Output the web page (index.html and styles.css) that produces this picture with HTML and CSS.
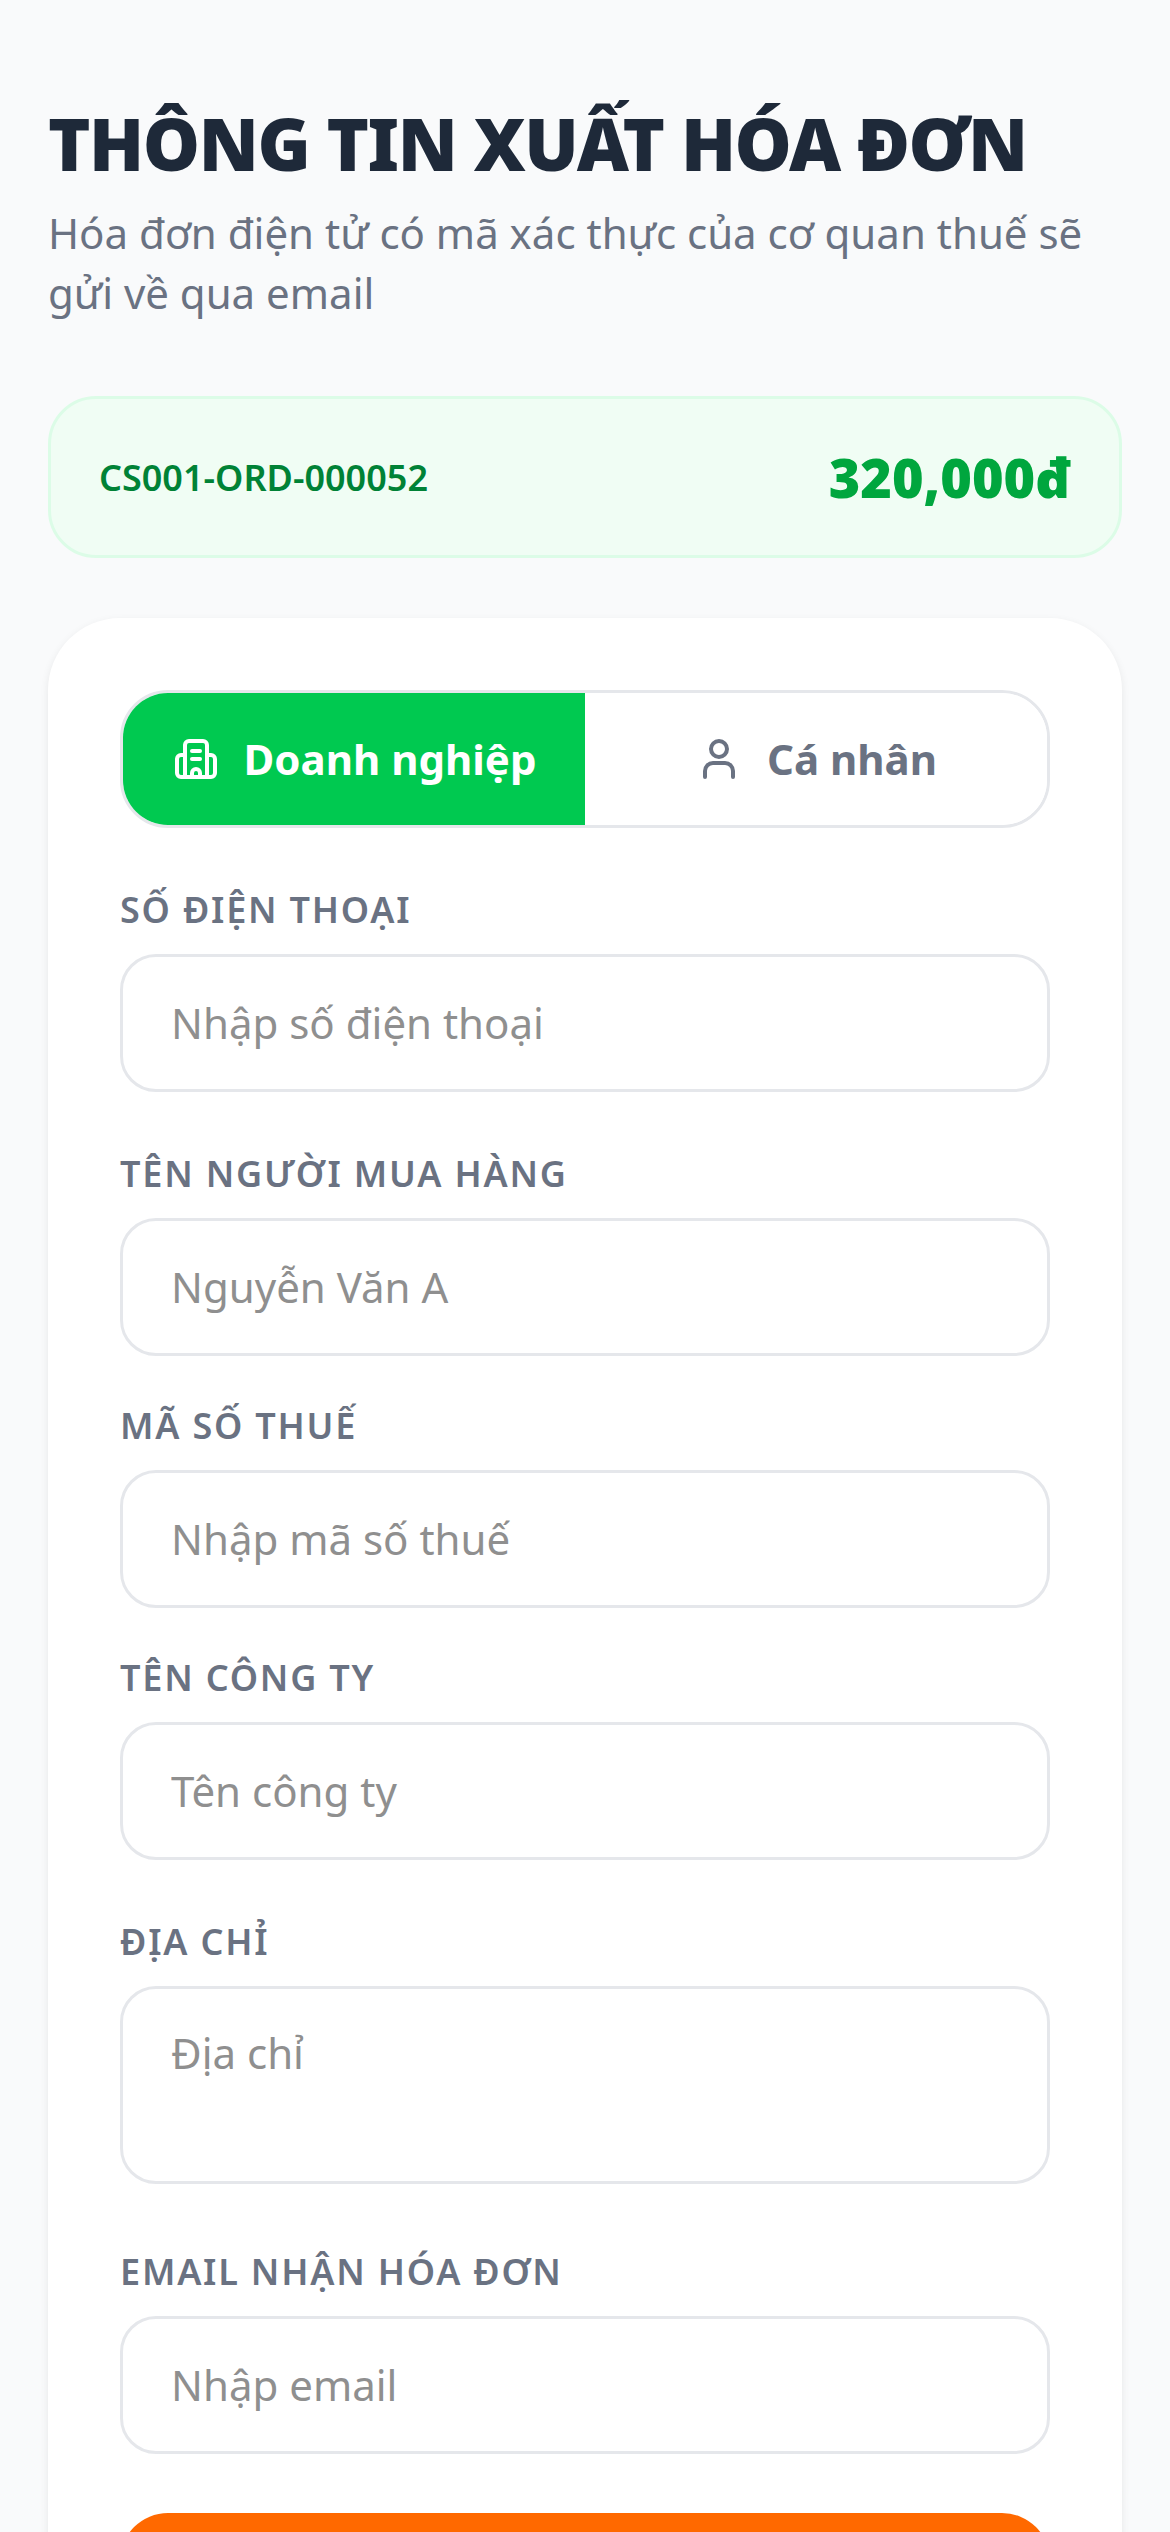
FILE: index.html
```html
<!DOCTYPE html>
<html lang="vi">
<head>
    <meta charset="UTF-8">
    <meta name="viewport" content="width=device-width, initial-scale=1.0">
    <title>Thông tin xuất hóa đơn</title>
    <link rel="stylesheet" href="styles.css">
</head>
<body>
    <div class="page">
        <h1>THÔNG TIN XUẤT HÓA ĐƠN</h1>
        <p class="subtitle">Hóa đơn điện tử có mã xác thực của cơ quan thuế sẽ gửi về qua email</p>

        <div class="order">
            <span class="order-code">CS001-ORD-000052</span>
            <span class="order-total">320,000đ</span>
        </div>

        <div class="card">
            <div class="tabs">
                <button class="tab active">
                    <svg class="tab-icon" viewBox="0 0 24 24" fill="none" stroke="currentColor" stroke-width="2" stroke-linecap="round" stroke-linejoin="round">
                        <path d="M6.5 21V5a2 2 0 0 1 2-2h7a2 2 0 0 1 2 2v16"/>
                        <path d="M6.5 10h-2a2 2 0 0 0-2 2v7a2 2 0 0 0 2 2h15a2 2 0 0 0 2-2v-7a2 2 0 0 0-2-2h-2"/>
                        <path d="M10 8h4"/>
                        <path d="M10 12h4"/>
                        <path d="M10 21v-2a2 2 0 0 1 4 0v2"/>
                    </svg>
                    Doanh nghiệp
                </button>
                <button class="tab">
                    <svg class="tab-icon" viewBox="0 0 24 24" fill="none" stroke="currentColor" stroke-width="2" stroke-linecap="round" stroke-linejoin="round">
                        <circle cx="12" cy="7" r="4"/>
                        <path d="M5 21v-3a4 4 0 0 1 4-4h6a4 4 0 0 1 4 4v3"/>
                    </svg>
                    Cá nhân
                </button>
            </div>

            <form class="form">
                <div class="field gap-lg">
                    <label>SỐ ĐIỆN THOẠI</label>
                    <input type="text" placeholder="Nhập số điện thoại">
                </div>
                <div class="field gap-lg">
                    <label>TÊN NGƯỜI MUA HÀNG</label>
                    <input type="text" placeholder="Nguyễn Văn A">
                </div>
                <div class="field">
                    <label>MÃ SỐ THUẾ</label>
                    <input type="text" placeholder="Nhập mã số thuế">
                </div>
                <div class="field">
                    <label>TÊN CÔNG TY</label>
                    <input type="text" placeholder="Tên công ty">
                </div>
                <div class="field gap-lg">
                    <label>ĐỊA CHỈ</label>
                    <textarea placeholder="Địa chỉ"></textarea>
                </div>
                <div class="field gap-xl">
                    <label>EMAIL NHẬN HÓA ĐƠN</label>
                    <input type="email" placeholder="Nhập email">
                </div>
                <button type="button" class="submit" aria-label="Xuất hóa đơn"></button>
            </form>
        </div>
    </div>
</body>
</html>
```

FILE: styles.css
```css
* {
    margin: 0;
    padding: 0;
    box-sizing: border-box;
    font-family: 'Noto Sans', Arial, sans-serif;
}

html, body {
    height: 2532px;
    overflow: hidden;
}

body {
    background-color: #f9fafb;
}

.page {
    padding: 94px 48px 48px;
}

h1 {
    color: #1e2939;
    font-size: 72px;
    font-weight: 900;
    line-height: 98px;
    letter-spacing: -1.44px;
}

.subtitle {
    color: #6a7282;
    font-size: 42px;
    line-height: 60px;
    margin-top: 11px;
}

.order {
    display: flex;
    justify-content: space-between;
    align-items: center;
    height: 162px;
    margin-top: 73px;
    padding: 0 48px;
    background-color: #f0fdf4;
    border: 3px solid #dcfce7;
    border-radius: 48px;
}

.order-code {
    color: #008236;
    font-size: 36px;
    font-weight: 600;
}

.order-total {
    color: #00a63e;
    font-size: 54px;
    font-weight: 900;
}

.card {
    margin-top: 60px;
    padding: 72px;
    background-color: #fff;
    border-radius: 72px;
    box-shadow: 0 3px 9px rgba(0, 0, 0, 0.08);
}

.tabs {
    display: flex;
    height: 138px;
    border: 3px solid #e5e7eb;
    border-radius: 48px;
    overflow: hidden;
}

.tab {
    flex: 1;
    display: flex;
    align-items: center;
    justify-content: center;
    gap: 24px;
    padding-bottom: 2px;
    border: none;
    background-color: #fff;
    color: #6a7282;
    font-size: 42px;
    font-weight: 700;
}

.tab.active {
    background-color: #00c950;
    color: #fff;
}

.tab-icon {
    width: 48px;
    height: 48px;
    margin-top: 2px;
}

.form {
    display: flex;
    flex-direction: column;
}

.field {
    margin-top: 46px;
}

.field.gap-lg {
    margin-top: 58px;
}

.field.gap-xl {
    margin-top: 64px;
}

label {
    display: block;
    color: #6a7282;
    font-size: 36px;
    font-weight: 600;
    letter-spacing: 1.8px;
    line-height: 48px;
    margin-bottom: 20px;
}

input, textarea {
    display: block;
    width: 100%;
    padding: 34px 48px 36px;
    border: 3px solid #e5e7eb;
    border-radius: 36px;
    background-color: #fff;
    font-size: 42px;
    line-height: 60px;
    resize: none;
}

input::placeholder, textarea::placeholder {
    color: #8f8f8f;
}

input {
    height: 138px;
}

textarea {
    height: 198px;
}

.submit {
    height: 168px;
    margin-top: 59px;
    border: none;
    border-radius: 48px;
    background-color: #ff6900;
}
```
